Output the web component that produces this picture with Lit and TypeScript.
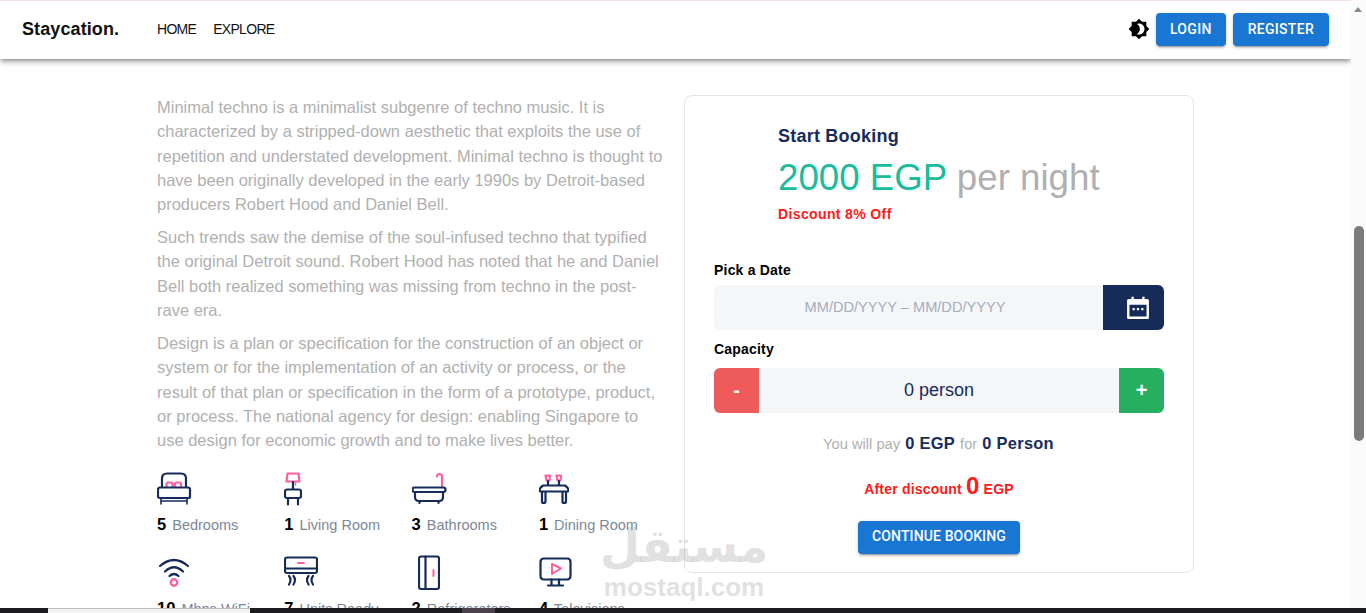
import { LitElement, html, css, svg } from "lit";
import { customElement } from "lit/decorators.js";

const N = "#152c5b";
const P = "#ff5f9e";
const st = (d: string, c = N, w = 2.2) => svg`<path d=${d} fill="none" stroke=${c} stroke-width=${w} stroke-linecap="round" stroke-linejoin="round"/>`;

const icons: Record<string, unknown> = {
  bed: svg`${st("M5 16V7.5Q5 2.5 10 2.5H24Q29 2.5 29 7.5V16")}${st("M9.5 16v-3q0-1.5 1.5-1.5h3q1.5 0 1.5 1.5v3M18 16v-3q0-1.5 1.5-1.5h3q1.5 0 1.5 1.5v3", P)}${st("M3 16.5H31Q33 16.5 33 18.5V25.5Q33 27 31 27H3Q1 27 1 25.5V18.5Q1 16.5 3 16.5Z")}${st("M4 27v6M30 27v6M4 30H30", N, 1.6)}`,
  lamp: svg`${st("M3.5 2.5H14.5L15.5 10.5H2.5Z", P)}${st("M9 11V18")}${st("M11.5 11V14", P, 1.4)}${st("M3 18.5H15Q17 18.5 17 20.5V25Q17 27 15 27H3Q1 27 1 25V20.5Q1 18.5 3 18.5Z")}${st("M4 27V33.5M14 27V33.5")}`,
  bath: svg`${st("M30 15.5V5.5Q30 3 27.5 3Q25 3 25 5.5", P)}${st("M2.5 16.5H31.5Q33.5 16.5 33.5 18.5Q33.5 21 31.5 21H2.5Q.5 21 .5 18.5Q.5 16.5 2.5 16.5Z")}${st("M3 21V26Q3 30 7 30H27Q31 30 31 26V21")}${st("M7.5 30.5V32M26.5 30.5V32")}`,
  table: svg`${st("M6.5 4.5H11L10.5 9.5H7.5ZM17.5 4.5H22L21.5 9.5H18.5Z", P)}${st("M9 10V14M20 10V14")}${st("M4 14.5H26Q29.5 17 29.5 19Q29.5 20.5 28 20.5H2Q.5 20.5 .5 19Q.5 17 4 14.5Z")}${st("M3 21V30.5Q3 32 4.5 32Q6.5 32 6.5 30.5V21M23.5 21V30.5Q23.5 32 25 32Q27 32 27 30.5V21")}`,
  wifi: svg`${st("M2 11Q16 -1 30 11M7 16.5Q16 8 25 16.5M11.5 21Q16 17 20.5 21")}<circle cx="16" cy="27.5" r="3.2" fill="none" stroke=${P} stroke-width="2.4"/>`,
  ac: svg`${st("M3 2.5H31Q33 2.5 33 4.5V16Q33 18 31 18H3Q1 18 1 16V4.5Q1 2.5 3 2.5Z")}${st("M1 13.5H33")}${st("M14 8H20", P, 2)}${st("M5 21Q8 25 5 29.5M9.5 21Q12.5 25 9.5 29.5M24.5 21Q21.5 25 24.5 29.5M29 21Q26 25 29 29.5")}`,
  fridge: svg`${st("M3 1.5H19Q21 1.5 21 3.5V32Q21 34 19 34H3Q1 34 1 32V3.5Q1 1.5 3 1.5Z")}${st("M7.5 1.5V34")}${st("M15.5 15V21", P, 2)}`,
  tv: svg`${st("M5 3.5H28Q31.5 3.5 31.5 7V20.5Q31.5 24.5 28 24.5H5Q1.5 24.5 1.5 20.5V7Q1.5 3.5 5 3.5Z")}${st("M13 9L22 13.5L13 19Z", P, 2)}${st("M12.5 24.5V30M20 24.5V30M9 30.5H24")}`,
};

const facts: [string, string, string, number, number][] = [
  ["5", "Bedrooms", "bed", 36, 0],
  ["1", "Living Room", "lamp", 18, 0],
  ["3", "Bathrooms", "bath", 36, 0],
  ["1", "Dining Room", "table", 30, 0],
  ["10", "Mbps WiFi", "wifi", 34, 1],
  ["7", "Units Ready", "ac", 34, 0],
  ["2", "Refrigerators", "fridge", 22, 6],
  ["4", "Televisions", "tv", 33, 0],
];

@customElement("app-root")
export class AppRoot extends LitElement {
  static styles = css`
    :host { display: block; height: 613px; overflow: hidden; position: relative; font-family: "Liberation Sans", Arial, sans-serif; background: #fff; }
    .frame { display: flex; height: 608px; }
    .page { flex: 1; min-width: 0; display: flex; flex-direction: column; overflow: hidden; }
    nav { flex: none; height: 58px; box-sizing: content-box; border-top: 1px solid #f8dfe3; background: #fff; box-shadow: 0 2px 4px -1px rgba(0,0,0,.35), 0 4px 5px 0 rgba(0,0,0,.14), 0 1px 10px 0 rgba(0,0,0,.1); display: flex; align-items: center; padding: 0 22px; position: relative; z-index: 1; }
    .nav-in { display: flex; align-items: center; flex: 1; margin-top: -2px; }
    .brand { font-size: 18px; font-weight: 700; color: #111; letter-spacing: .1px; width: 135px; }
    .link { font-size: 14px; color: #111; margin-right: 17px; letter-spacing: -.7px; }
    .spacer { flex: 1; }
    .theme { width: 22px; height: 22px; margin-right: -1px; display: block; }
    .btn { border: 0; background: #1976d2; color: #fff; font: 500 14px Roboto, sans-serif; height: 33px; border-radius: 4px; padding: 0 14px 1px; box-shadow: 0 3px 1px -2px rgba(0,0,0,.2), 0 2px 2px 0 rgba(0,0,0,.14), 0 1px 5px 0 rgba(0,0,0,.12); text-transform: uppercase; display: block; }
    .nav-btn { margin-left: 7px; letter-spacing: .3px; }
    .reg { padding-left: 15px; padding-right: 15px; }
    .wide { letter-spacing: .12px; padding-bottom: 3px; }
    main { flex: 1; min-height: 0; display: flex; gap: 17px; padding: 36px 0 0 157px; overflow: hidden; }
    .left { width: 510px; flex: none; }
    .left p { margin: 0 0 8.7px; font-size: 16.5px; line-height: 24.3px; color: #b0b0b0; }
    .facts { display: grid; grid-template-columns: repeat(4, 127.3px); grid-auto-rows: 84px; margin-top: 16px; }
    .fact { display: flex; flex-direction: column; padding-top: 2px; }
    .fact svg { height: 36px; display: block; flex: none; }
    .fact-t { margin-top: 6px; font-size: 14.5px; color: #7d8798; line-height: 22px; white-space: nowrap; }
    .fact-t b { font-size: 16.5px; color: #000; margin-right: 2px; }
    .card { width: 510px; height: 478px; box-sizing: border-box; flex: none; border: 1px solid #e5e5e5; border-radius: 8px; padding: 29px 29px 0; }
    .head { padding-left: 64px; }
    .title { font-size: 18px; line-height: 22px; font-weight: 700; color: #152c5b; letter-spacing: .22px; }
    .price { font-size: 36.7px; line-height: 42px; margin-top: 10px; color: #b0b0b0; }
    .price span { color: #1abc9c; }
    .disc { font-size: 14px; font-weight: 700; color: #ff1a1a; letter-spacing: .37px; margin-top: 6px; line-height: 18px; }
    .label { font-size: 14px; font-weight: 700; color: #000; line-height: 18px; letter-spacing: .2px; }
    .lab1 { margin-top: 38px; margin-bottom: 6px; }
    .lab2 { margin-top: 10px; margin-bottom: 10px; }
    .field { display: flex; height: 45px; border-radius: 6px; overflow: hidden; background: #f5f6f8; }
    .ph { flex: 1; display: flex; align-items: center; justify-content: center; font-size: 14.6px; color: #a5adbd; padding-right: 7px; padding-bottom: 1px; }
    .cal { width: 61px; background: #152c5b; display: flex; align-items: center; justify-content: center; padding-left: 8px; box-sizing: border-box; }
    .cal svg { width: 26px; height: 26px; display: block; }
    .step { width: 45px; display: flex; align-items: center; justify-content: center; color: #fff; font-size: 20px; font-weight: 700; }
    .minus { background: #ef5a5a; }
    .plus { background: #27ae60; }
    .val { flex: 1; text-align: center; line-height: 45px; font-size: 18px; color: #152c5b; }
    .pay { text-align: center; margin-top: 19px; line-height: 22px; font-size: 14.7px; color: #b0b0b0; }
    .pay b { font-size: 16.4px; color: #152c5b; letter-spacing: .3px; margin: 0 1px; }
    .after { text-align: center; margin-top: 16px; line-height: 30px; font-size: 14px; font-weight: 700; color: #ff1a1a; letter-spacing: .2px; }
    .after span { font-size: 24px; }
    .cta { display: flex; justify-content: center; margin-top: 17px; }
    .bar { width: 15px; flex: none; background: #fbfbfb; position: relative; }
    .arrow { position: absolute; left: 3px; top: 7px; width: 0; height: 0; border: 4.5px solid transparent; border-top: 0; border-bottom: 5px solid #8a8a8a; }
    .thumb { position: absolute; left: 3px; top: 226px; width: 10px; height: 215px; border-radius: 5px; background: #7b7b7b; }
    .task { display: flex; height: 5px; background: #1d1d1f; }
    .t1 { width: 48px; }
    .t2 { width: 202px; background: #f3f3f3; border-top: 1px solid #bdbdbd; box-sizing: border-box; }
    .t3 { width: 212px; }
    .t4 { width: 33px; background: #4a404c; }
    .wm { position: absolute; left: 598px; top: 518px; width: 172px; text-align: center; color: rgba(170,170,170,.36); pointer-events: none; font-weight: 700; }
    .wm-ar { font-family: "DejaVu Sans", sans-serif; font-size: 46px; line-height: 56px; }
    .wm-en { font-family: "Liberation Sans", sans-serif; font-size: 26px; line-height: 26px; }
  `;

  render() {
    return html`
      <div class="frame">
        <div class="page">
          <nav>
            <div class="nav-in">
              <div class="brand">Staycation.</div>
              <div class="link">HOME</div>
              <div class="link">EXPLORE</div>
              <div class="spacer"></div>
              <svg class="theme" viewBox="0 0 24 24"><path fill="#000" d="M20 8.69V4h-4.69L12 .69 8.69 4H4v4.69L.69 12 4 15.31V20h4.69L12 23.31 15.31 20H20v-4.69L23.31 12 20 8.69zM12 18c-.89 0-1.74-.2-2.5-.55C11.56 16.5 13 14.42 13 12s-1.44-4.5-3.5-5.45C10.26 6.2 11.11 6 12 6c3.31 0 6 2.69 6 6s-2.69 6-6 6z"/></svg>
              <button class="btn nav-btn">Login</button>
              <button class="btn nav-btn reg">Register</button>
            </div>
          </nav>
          <main>
            <div class="left">
              <p>Minimal techno is a minimalist subgenre of techno music. It is characterized by a stripped-down aesthetic that exploits the use of repetition and understated development. Minimal techno is thought to have been originally developed in the early 1990s by Detroit-based producers Robert Hood and Daniel Bell.</p>
              <p>Such trends saw the demise of the soul-infused techno that typified the original Detroit sound. Robert Hood has noted that he and Daniel Bell both realized something was missing from techno in the post-rave era.</p>
              <p>Design is a plan or specification for the construction of an object or system or for the implementation of an activity or process, or the result of that plan or specification in the form of a prototype, product, or process. The national agency for design: enabling Singapore to use design for economic growth and to make lives better.</p>
              <div class="facts">
                ${facts.map(([n, l, ic, w, off]) => html`
                  <div class="fact">
                    <svg viewBox="0 0 ${w} 36" style="width:${w}px;margin-left:${off}px">${icons[ic]}</svg>
                    <div class="fact-t"><b>${n}</b> ${l}</div>
                  </div>`)}
              </div>
            </div>
            <section class="card">
              <div class="head">
                <div class="title">Start Booking</div>
                <div class="price"><span>2000 EGP</span> per night</div>
                <div class="disc">Discount 8% Off</div>
              </div>
              <div class="label lab1">Pick a Date</div>
              <div class="field">
                <div class="ph">MM/DD/YYYY – MM/DD/YYYY</div>
                <div class="cal"><svg viewBox="0 0 24 24"><path fill="none" stroke="#fff" stroke-width="2.2" stroke-linejoin="round" d="M3 5h18v16H3z"/><path stroke="#fff" stroke-width="2.2" d="M7 1.5v4M17 1.5v4"/><path fill="#fff" d="M3 4h18v5H3zM7 12h2v2H7zM11 12h2v2h-2zM15 12h2v2h-2z"/></svg></div>
              </div>
              <div class="label lab2">Capacity</div>
              <div class="field">
                <div class="step minus">-</div>
                <div class="val">0 person</div>
                <div class="step plus">+</div>
              </div>
              <div class="pay">You will pay <b>0 EGP</b> for <b>0 Person</b></div>
              <div class="after">After discount <span>0</span> EGP</div>
              <div class="cta"><button class="btn wide">Continue Booking</button></div>
            </section>
          </main>
        </div>
        <div class="bar"><div class="arrow"></div><div class="thumb"></div></div>
      </div>
      <div class="task"><div class="t1"></div><div class="t2"></div><div class="t3"></div><div class="t4"></div></div>
      <div class="wm"><div class="wm-ar">مستقل</div><div class="wm-en">mostaql.com</div></div>
    `;
  }
}
